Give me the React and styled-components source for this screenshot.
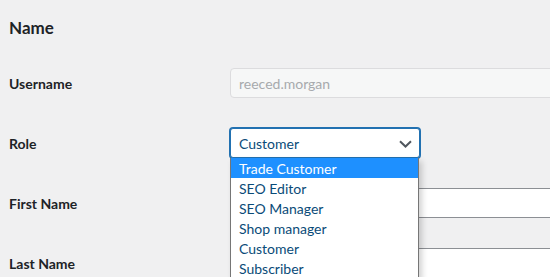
import React from "react";
import styled, { createGlobalStyle } from "styled-components";

const Global = createGlobalStyle`
  html, body { margin: 0; padding: 0; background: #f0f0f1; }
  body { font-family: "Lato", "Open Sans", sans-serif; color: #1d2327; overflow: hidden; }
`;

const Page = styled.div`
  width: 550px;
  height: 277px;
  overflow: hidden;
  padding-left: 9px;
  box-sizing: border-box;
`;

const Heading = styled.h2`
  margin: 17px 0 14px;
  font-size: 17px;
  line-height: 22px;
  font-weight: 700;
  color: #1d2327;
`;

const Row = styled.div`
  display: flex;
  height: 60px;
  padding-top: 15px;
  box-sizing: border-box;
`;

const Label = styled.div`
  width: 221px;
  flex: none;
  padding-top: 7px;
  font-size: 14px;
  line-height: 18px;
  font-weight: 700;
  color: #1d2327;
`;

const TextInput = styled.div`
  flex: none;
  width: 350px;
  height: 30px;
  box-sizing: border-box;
  border: 1px solid ${(p) => (p.$disabled ? "#dcdcde" : "#8c8f94")};
  background: ${(p) => (p.$disabled ? "#f6f7f7" : "#fff")};
  border-radius: 4px;
  padding: 0 8px;
  font-size: 14px;
  line-height: 29px;
  color: ${(p) => (p.$disabled ? "#a7aaad" : "#2c3338")};
`;

const SelectWrap = styled.div`
  position: relative;
  flex: none;
  width: 190px;
  height: 30px;
  z-index: 2;
`;

const SelectBox = styled.div`
  display: flex;
  align-items: center;
  justify-content: space-between;
  height: 30px;
  box-sizing: border-box;
  border: 1px solid #2271b1;
  box-shadow: 0 0 0 1px #2271b1;
  border-radius: 3px;
  background: #fff;
  padding: 1px 7px 0 8px;
  font-size: 14px;
  color: #0a4b78;
`;

const List = styled.ul`
  position: absolute;
  top: 30px;
  left: 0;
  width: 189px;
  margin: 0;
  padding: 0;
  list-style: none;
  box-sizing: border-box;
  border: 1px solid #767676;
  border-top: none;
  background: #fff;
  box-shadow: 3px 3px 6px rgba(0, 0, 0, 0.18);
`;

const Item = styled.li`
  height: 20px;
  line-height: 22px;
  overflow: hidden;
  padding-left: 8px;
  font-size: 14px;
  color: ${(p) => (p.$active ? "#fff" : "#0a4b78")};
  background: ${(p) => (p.$active ? "#1e90ff" : "transparent")};
`;

const Chevron = () => (
  <svg width="13" height="8" viewBox="0 0 13 8" aria-hidden="true">
    <path d="M1 1.2 L6.5 6.5 L12 1.2" fill="none" stroke="#50575e" strokeWidth="2" />
  </svg>
);

const roles = ["Trade Customer", "SEO Editor", "SEO Manager", "Shop manager", "Customer", "Subscriber"];

export default function App() {
  return (
    <Page>
      <Global />
      <Heading>Name</Heading>
      <Row>
        <Label>Username</Label>
        <TextInput $disabled>reeced.morgan</TextInput>
      </Row>
      <Row>
        <Label>Role</Label>
        <SelectWrap>
          <SelectBox>
            <span>Customer</span>
            <Chevron />
          </SelectBox>
          <List>
            {roles.map((r, i) => (
              <Item key={r} $active={i === 0}>{r}</Item>
            ))}
          </List>
        </SelectWrap>
      </Row>
      <Row>
        <Label>First Name</Label>
        <TextInput />
      </Row>
      <Row>
        <Label>Last Name</Label>
        <TextInput />
      </Row>
    </Page>
  );
}
